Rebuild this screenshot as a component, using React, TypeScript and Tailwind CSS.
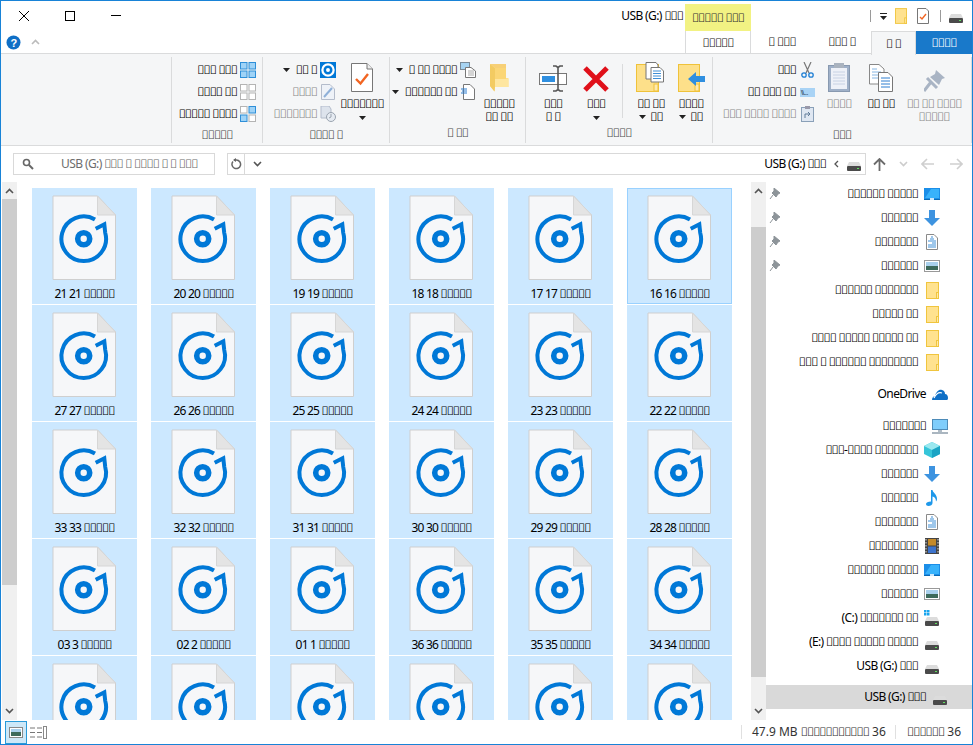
import React from "react";

const t = (s: string) =>
  s.split(/(#+)/).map((p, i) =>
    p.startsWith("#") ? (
      <span key={i} className="tracking-[-1px]">{p.replace(/#/g, "\uE000")}</span>
    ) : (
      <span key={i}>{p}</span>
    )
  );

function Txt({ s, className = "" }: { s: string; className?: string }) {
  return <span className={"whitespace-nowrap " + className}>{t(s)}</span>;
}

const Chevron = ({ up = false, c = "#555" }: { up?: boolean; c?: string }) => (
  <svg width="9" height="6" viewBox="0 0 9 6"><path d={up ? "M1 5 L4.5 1.5 L8 5" : "M1 1 L4.5 4.5 L8 1"} fill="none" stroke={c} strokeWidth="1.6" /></svg>
);

const Caret = () => (
  <svg width="7" height="4" viewBox="0 0 7 4" className="shrink-0"><path d="M0 0H7L3.5 4Z" fill="#222" /></svg>
);

const Drive = () => (
  <svg width="14" height="9" viewBox="0 0 14 9">
    <path d="M2 0H12L14 4H0Z" fill="#dcdcdc" />
    <rect x="0" y="4" width="14" height="5" rx="1" fill="#4a4a4a" />
    <rect x="10" y="6" width="2" height="1" fill="#5fe05f" />
  </svg>
);
const NavDrive = () => <span className="mt-[6px] flex"><Drive /></span>;

const FolderPlain = ({ w = 13, h = 17 }: { w?: number; h?: number }) => (
  <svg width={w} height={h} viewBox="0 0 13 17">
    <rect x="0.5" y="0.5" width="12" height="16" fill="#ffe28f" stroke="#f0c53e" />
    <rect x="10.5" y="10.5" width="2" height="6" fill="#ffe9a8" stroke="#f0c53e" />
  </svg>
);

const FileIcon = () => (
  <svg width="65" height="86" viewBox="0 0 65 86" className="block">
    <path d="M1 1 H45.500 L63.500 20 V84.500 H1 Z" fill="#f6f7f9" stroke="#cfcfcf" />
    <path d="M45.500 1 V20 H63.500 Z" fill="#e4e4e4" stroke="#d6d6d6" />
    <g transform="translate(6.7 18.7)">
      <path d="M36.300 5.800 A22.300 22.300 0 1 0 46.500 19 L45.600 10.600 L37 15" fill="none" stroke="#0078d7" strokeWidth="4" />
      <circle cx="25" cy="25" r="6" fill="none" stroke="#0078d7" strokeWidth="5.600" />
    </g>
  </svg>
);

const FILES = [
  ["21 21", "20 20", "19 19", "18 18", "17 17", "16 16"],
  ["27 27", "26 26", "25 25", "24 24", "23 23", "22 22"],
  ["33 33", "32 32", "31 31", "30 30", "29 29", "28 28"],
  ["03 3", "02 2", "01 1", "36 36", "35 35", "34 34"],
  ["", "", "", "", "", ""],
];

function Cell({ label, focus }: { label: string; focus?: boolean }) {
  return (
    <div className={"h-[116px] bg-[#cce8ff] flex flex-col items-center " + (focus ? "border border-[#99d1ff] pt-[6px]" : "pt-[7px]")}>
      <FileIcon />
      {label && <div className="mt-[5px] text-[12px] leading-[16px] text-black tracking-[-0.8px] whitespace-nowrap">{t(label + " #####")}</div>}
    </div>
  );
}

const Scroll = ({ topH, thumbH }: { topH: number; thumbH: number }) => (
  <div className="w-[15px] shrink-0 h-full bg-[#f0f0f0] flex flex-col">
    <div style={{ height: topH }} className="flex pt-[6px] justify-center shrink-0"><Chevron up /></div>
    <div style={{ height: thumbH }} className="bg-[#cdcdcd] shrink-0" />
    <div className="flex-1 flex items-end justify-center pb-[6px]"><Chevron /></div>
  </div>
);

const Pin = () => (
  <svg width="12" height="12" viewBox="0 0 12 12">
    <path d="M5 0 L11 5 L9 6 L7 9 L3 5 L5 3Z M4 7 L1 11" fill="#8d9499" stroke="#8d9499" />
  </svg>
);
const DesktopI = () => (
  <svg width="16" height="12" viewBox="0 0 16 12"><rect width="16" height="12" fill="#1b8ee8" /><path d="M1 10 L7 1H15V10Z" fill="#38b2fb" /><rect y="11" width="16" height="1" fill="#0a6ab5" /><rect x="6" y="10" width="4" height="2" fill="#cfe8fb" /></svg>
);
const DownI = () => (
  <svg width="16" height="16" viewBox="0 0 16 16"><path d="M5 0H11V8H16L8 16L0 8H5Z" fill="#3d93e0" /></svg>
);
const DocI = () => (
  <svg width="12" height="16" viewBox="0 0 12 16"><path d="M.5.5H8L11.5 4V15.5H.5Z" fill="#fff" stroke="#8a8a8a" /><path d="M5 3H7M4 5H8M2 7H10M6 9H10M2 11H10M2 13H10" stroke="#3f8fd6" /></svg>
);
const PicI = () => (
  <svg width="16" height="12" viewBox="0 0 16 12"><rect x=".5" y=".5" width="15" height="11" fill="#fff" stroke="#999" /><rect x="2" y="2" width="12" height="4" fill="#a9d0ec" /><rect x="2" y="6" width="12" height="4" fill="#3d6a5b" /></svg>
);
const MonitorI = () => (
  <svg width="16" height="15" viewBox="0 0 16 15"><rect x=".5" y=".5" width="15" height="10" fill="#7fcdfb" stroke="#4d8bb8" /><rect x="6" y="11" width="4" height="2" fill="#b0bcc6" /><rect y="13" width="16" height="2" fill="#aab6c0" /></svg>
);
const CubeI = () => (
  <svg width="16" height="16" viewBox="0 0 16 16"><path d="M8 0L16 4V12L8 16L0 12V4Z" fill="#36c5d9" /><path d="M8 0L16 4L8 8L0 4Z" fill="#9ae8ef" /><path d="M8 8L16 4V12L8 16Z" fill="#1aa3c4" /></svg>
);
const MusicI = () => (
  <svg width="12" height="16" viewBox="0 0 12 16"><path d="M5 0H6.5C7 3 11 4 11 9C11 10 10.5 11 10 11.5C10 8.5 8.5 7 6.5 6.5V13C6.5 15 4.5 16 2.5 16C1 16 0 15 0 14C0 12.5 2 11.5 5 11.5Z" fill="#1e98ea" /></svg>
);
const VideoI = () => (
  <svg width="14" height="16" viewBox="0 0 14 16"><rect width="14" height="16" fill="#444" /><rect x="3" y="1" width="8" height="6.5" fill="#c48a2a" /><rect x="3" y="8.5" width="8" height="6.5" fill="#3d73cc" /><path d="M1 1V15M13 1V15" stroke="#ddd" strokeDasharray="1.5 1.5" /></svg>
);
const CDrive = () => (
  <svg width="16" height="16" viewBox="0 0 16 16"><g fill="#19a5ee"><rect width="2.500" height="2.500" /><rect x="3" width="2.500" height="2.500" /><rect y="3" width="2.500" height="2.500" /><rect x="3" y="3" width="2.500" height="2.500" /></g><g transform="translate(1 7)"><Drive /></g></svg>
);
const Cloud = () => (
  <svg width="16" height="11" viewBox="0 0 16 11"><path d="M0 11C0 8 2 7 3 7C4 3 7 0 10 1C12 1.500 13 3 13 5C15 5 16 7 16 9C16 10 15.500 11 15 11Z" fill="#0f6fc6" /><path d="M2 9C4 5 7 3 10 4" stroke="#fff" strokeWidth="1.2" fill="none" /></svg>
);

function NavRow({ s, icon, pin, root, sel, cls = "" }: { s: string; icon: React.ReactNode; pin?: boolean; root?: boolean; sel?: boolean; cls?: string }) {
  return (
    <div className={"relative h-6 shrink-0 flex items-center justify-end gap-[6px] text-[12px] text-black " + (root ? "pr-[24px] " : "pr-[32px] ") + (sel ? "bg-[#d9d9d9] " : "") + cls}>
      {pin && <span className="absolute left-[3px] top-[6px]"><Pin /></span>}
      <Txt s={s} />
      <span className="w-[16px] h-[16px] flex items-center justify-center shrink-0">{icon}</span>
    </div>
  );
}

function RowBtn({ s, icon, caret, gray }: { s: string; icon: React.ReactNode; caret?: boolean; gray?: boolean }) {
  return (
    <div className={"h-[22px] flex items-center justify-end gap-[3px] text-[12px] " + (gray ? "text-[#8a8a8a]" : "text-black")}>
      {caret && <span className="mr-[3px]"><Caret /></span>}
      <Txt s={s} />
      <span className="w-[16px] h-[16px] flex items-center justify-center shrink-0">{icon}</span>
    </div>
  );
}

function BigBtn({ icon, l1, l2, caret, caret2, w, gray }: { icon: React.ReactNode; l1: string; l2?: string; caret?: boolean; caret2?: boolean; w: number; gray?: boolean }) {
  return (
    <div style={{ width: w }} className={"shrink-0 flex flex-col items-center text-[12px] leading-[13px] " + (gray ? "text-[#8a8a8a]" : "text-black")}>
      <div className="h-[33px] flex items-end justify-center">{icon}</div>
      <div className="mt-[5px] whitespace-nowrap">{t(l1)}</div>
      <div className="h-[13px] flex items-center justify-center gap-[4px] whitespace-nowrap">
        {caret2 && <Caret />}
        {l2 && <span>{t(l2)}</span>}
        {caret && <span className="mt-[2px]"><Caret /></span>}
      </div>
    </div>
  );
}

function Group({ w, label, children, cls = "" }: { w: number; label: string; children: React.ReactNode; cls?: string }) {
  return (
    <div style={{ width: w }} className="shrink-0 border-r border-[#dadbdc] h-[86px] mt-[3px] flex flex-col">
      <div className={"flex-1 flex items-start " + cls}>{children}</div>
      <div className="h-[20px] pt-[2px] text-center text-[12px] text-[#4c4c4c] leading-[16px]">{t(label)}</div>
    </div>
  );
}

const GridIcon = ({ a, b, c, d }: { a: boolean; b: boolean; c: boolean; d: boolean }) => (
  <svg width="16" height="16" viewBox="0 0 16 16">
    {[[0, 0, a], [8.500, 0, b], [0, 8.500, c], [8.500, 8.500, d]].map(([x, y, on], i) => (
      <rect key={i} x={(x as number) + 0.5} y={(y as number) + 0.5} width="6.500" height="6.500" fill={on ? "#9fd3f7" : "#fff"} stroke={on ? "#2f8fd8" : "#b4b4b4"} />
    ))}
  </svg>
);

const PropsIcon = () => (
  <svg width="22" height="29" viewBox="0 0 22 29"><path d="M.5.5H16L21.500 6V28.500H.5Z" fill="#fff" stroke="#777" /><path d="M16 .5V6H21.500" fill="#eee" stroke="#777" /><path d="M5 16L9.500 20.500L17 11" fill="none" stroke="#f26522" strokeWidth="2.4" /></svg>
);
const BigFolder = () => (
  <svg width="19" height="28" viewBox="0 0 19 28">
    <path d="M0 0H16V14H18.500V23H5L4.500 27.500L0 22Z" fill="#fde08e" />
    <path d="M5 4H16V23H5Z" fill="#fbd676" />
    <path d="M0 0L5 4V23L4.500 27.500L0 22Z" fill="#f3cb62" />
    <path d="M0 0H16V4H5Z" fill="#f7d077" />
    <path d="M5 15H18.500V23H5Z" fill="#fee6a0" />
  </svg>
);
const Rename = () => (
  <svg width="28" height="27" viewBox="0 0 28 27"><rect x=".5" y="8.500" width="27" height="11" fill="#fff" stroke="#777" /><rect x="3" y="11" width="13" height="6" fill="#2f8fe0" /><path d="M17 1H20L22 2.500L24 1H27M22 2.500V24.500M17 26H20L22 24.500L24 26H27" transform="translate(-3 0)" fill="none" stroke="#555" strokeWidth="1.6" /></svg>
);
const Del = () => (
  <svg width="26" height="26" viewBox="0 0 26 26"><path d="M2 2L24 24M24 2L2 24" stroke="#e0101a" strokeWidth="5" /></svg>
);
const CopyTo = () => (
  <svg width="30" height="30" viewBox="0 0 30 30"><rect x=".5" y="2.500" width="22" height="27" fill="#fde08a" stroke="#efc23a" /><rect x="18" y="22" width="4" height="7" fill="#fde9b0" stroke="#efc23a" /><path d="M10 .5H20L22 3V17H10Z" fill="#fff" stroke="#777" /><path d="M15 5.500H24L27.500 9V20H15Z" fill="#fff" stroke="#777" /><path d="M17 9H25M17 11.500H25M17 14H25M17 16.500H25" stroke="#3f8fd6" /></svg>
);
const MoveTo = () => (
  <svg width="27" height="28" viewBox="0 0 27 28"><rect x=".5" y=".5" width="21" height="27" fill="#fde08a" stroke="#efc23a" /><rect x="17" y="20" width="4" height="7" fill="#fde9b0" stroke="#efc23a" /><path d="M10 15L18 8V12H27V18H18V22Z" fill="#2f8fe0" /></svg>
);
const Paste = () => (
  <svg width="22" height="29" viewBox="0 0 22 29"><rect x=".5" y="2.500" width="21" height="26" fill="#9fb0c8" stroke="#8899b0" /><rect x="3" y="5" width="16" height="21" fill="#eef1f8" /><rect x="6" y="0" width="10" height="5" fill="#aab3bf" /><path d="M5 9H17M5 12H17M5 15H17M5 18H17M5 21H17" stroke="#c8d2e4" /></svg>
);
const CopyBig = () => (
  <svg width="24" height="28" viewBox="0 0 24 28"><path d="M.5.5H10L15 5V20H.5Z" fill="#fff" stroke="#888" /><path d="M3 5H8M3 8H12M3 11H12M3 14H12" stroke="#86b6e4" /><path d="M9.500 8.500H19L23.500 13V27.500H9.500Z" fill="#fff" stroke="#777" /><path d="M12 14H21M12 17H21M12 20H21M12 23H21" stroke="#2f7fd0" /></svg>
);
const PinBig = () => (
  <svg width="21" height="22" viewBox="0 0 21 22"><path d="M12 0L21 8L18 9L15 15L6 7L11 4Z" fill="#a9b4c4" /><path d="M7 12L0 21M3 8L13 18" stroke="#a9b4c4" strokeWidth="3" /></svg>
);
const Scissors = () => (
  <svg width="13" height="16" viewBox="0 0 13 16"><path d="M3 0L8 11M10 0L5 11" stroke="#777" strokeWidth="1.200" /><circle cx="3" cy="13" r="2.200" fill="none" stroke="#1f7fd4" strokeWidth="1.300" /><circle cx="10" cy="13" r="2.200" fill="none" stroke="#1f7fd4" strokeWidth="1.300" /></svg>
);

export default function App() {
  return (
    <div className="w-[973px] h-[745px] bg-white border border-[#1883d7] overflow-hidden flex flex-col font-['Noto_Sans','Liberation_Sans',sans-serif] text-[12px] tracking-[-0.6px]">
      {/* title */}
      <div className="h-[30px] shrink-0 flex items-center relative">
        <div className="w-[46px] flex justify-center"><svg width="12" height="12" viewBox="0 0 12 12"><path d="M1 1L11 11M11 1L1 11" stroke="#000" /></svg></div>
        <div className="w-[46px] flex justify-center"><svg width="10" height="10" viewBox="0 0 10 10"><rect x=".5" y=".5" width="9" height="9" fill="none" stroke="#000" /></svg></div>
        <div className="w-[46px] flex justify-center"><svg width="10" height="2" viewBox="0 0 10 2"><rect width="10" height="1" fill="#000" /></svg></div>
        <div className="flex-1 text-right pr-[2px]"><Txt s="USB (G:) ###" /></div>
        <div className="w-[66px] h-[27px] mt-[3px] bg-[#f2f283] text-center leading-[27px] text-[#333] shrink-0">{t("##### ###")}</div>
        <div className="w-[119px] shrink-0" />
        <div className="w-px h-[12px] bg-[#9a9a9a] shrink-0" />
        <div className="w-[24px] shrink-0 flex justify-center"><svg width="7" height="7" viewBox="0 0 7 7"><rect width="7" height="1" fill="#222" /><path d="M0 3H7L3.500 7Z" fill="#222" /></svg></div>
        <div className="w-[12px] shrink-0 mr-[10px]"><FolderPlain w={12} h={16} /></div>
        <div className="w-[12px] shrink-0 mr-[11px]"><svg width="12" height="16" viewBox="0 0 12 16"><path d="M.5.5H9L11.500 3V15.500H.5Z" fill="#fff" stroke="#777" /><path d="M3 9L5 11L9 6" fill="none" stroke="#f26522" strokeWidth="1.400" /></svg></div>
        <div className="w-px h-[12px] bg-[#9a9a9a] shrink-0" />
        <div className="shrink-0 pl-[8px] pr-[9px] pt-[4px]"><Drive /></div>
      </div>
      {/* tabs */}
      <div className="h-[23px] shrink-0 flex items-center relative border-b border-[#dadbdc]">
        <div className="w-[22px] flex justify-center ml-[1px]"><svg width="15" height="15" viewBox="0 0 15 15"><circle cx="7.500" cy="7.500" r="7" fill="#0f6fc6" /><text x="7.500" y="11.500" textAnchor="middle" fontSize="11" fontWeight="700" fill="#fff" fontFamily="Liberation Sans">?</text></svg></div>
        <div className="w-[22px] flex justify-center"><Chevron up c="#bbb" /></div>
        <div className="ml-[639px] w-[66px] h-full border-x border-[#dadbdc] text-center leading-[23px] text-[#222]">{t("#####")}</div>
        <div className="w-[62px] text-center text-[#222]">{t("# ###")}</div>
        <div className="w-[58px] text-center text-[#222]">{t("### #")}</div>
        <div className="w-[45px] h-[24px] mt-[1px] bg-[#f5f6f7] border-x border-t border-[#dadbdc] text-center leading-[23px] text-[#222]">{t("# #")}</div>
        <div className="w-[56px] h-[23px] bg-[#1979ca] text-white text-center leading-[23px]">{t("####")}</div>
      </div>
      {/* ribbon */}
      <div className="h-[92px] shrink-0 bg-[#f5f6f7] border-b border-[#dadbdc] flex">
        <Group w={171} label=""><span /></Group>
        <Group w={91} label="#####" cls="flex-col pr-[6px] pt-[2px]">
          <div className="w-full"><RowBtn s="### ###" icon={<GridIcon a b c d />} /></div>
          <div className="w-full"><RowBtn s="#### ##" icon={<GridIcon a={false} b={false} c={false} d={false} />} /></div>
          <div className="w-full"><RowBtn s="##### ####" icon={<GridIcon a={false} b c d={false} />} /></div>
        </Group>
        <Group w={127} label="#### #" cls="pl-[1px] pt-[2px]">
          <div className="w-[72px] shrink-0 flex flex-col">
            <RowBtn caret s="## #" icon={<span className="w-4 h-4 bg-[#0078d7] flex items-center justify-center"><svg width="14" height="14" viewBox="0 0 50 50"><circle cx="25" cy="25" r="20" fill="none" stroke="#fff" strokeWidth="8" /><circle cx="25" cy="25" r="7" fill="#fff" /></svg></span>} />
            <RowBtn gray s="####" icon={<svg width="14" height="16" viewBox="0 0 14 16"><path d="M.5.5H9L13.500 5V15.500H.5Z" fill="#eef2f8" stroke="#b4bccb" /><path d="M3 13L11 4" stroke="#8fb0d8" strokeWidth="2" /></svg>} />
            <RowBtn gray s="#######" icon={<svg width="16" height="16" viewBox="0 0 16 16"><path d="M1 0H9L11 3V12H1Z" fill="#dde3ec" stroke="#b4bccb" /><circle cx="11" cy="11" r="4.500" fill="#e6ebf2" stroke="#9aa3af" /><path d="M11 8V11L9 12" stroke="#9aa3af" fill="none" /></svg>} />
          </div>
          <div className="ml-[5px]"><BigBtn w={42} icon={<PropsIcon />} l1="#######" caret /></div>
        </Group>
        <Group w={136} label="# ##" cls="pl-[5px] pt-[2px]">
          <div className="w-[81px] shrink-0 flex flex-col">
            <RowBtn caret s="# ## ####" icon={<svg width="16" height="16" viewBox="0 0 16 16"><rect x=".5" y=".5" width="9" height="7" fill="#a6d3f2" stroke="#7a8a98" /><path d="M5.500 5.500H11L15.500 9V15.500H5.500Z" fill="#fff" stroke="#777" /><path d="M8 9H14M8 11H14M8 13H14" stroke="#aaa" /></svg>} />
            <RowBtn caret s="###### ##" icon={<svg width="14" height="16" viewBox="0 0 14 16"><path d="M2.500.5H9L13.500 5V15.500H2.500Z" fill="#fff" stroke="#777" /><path d="M0 5H6M1 7H6M0 9H6" stroke="#2f7fd0" /></svg>} />
          </div>
          <div className="ml-[1px]"><BigBtn w={44} icon={<BigFolder />} l1="#####" l2="## ##" /></div>
        </Group>
        <Group w={187} label="####" cls="pl-[1px] pt-[2px]">
          <BigBtn w={52} icon={<Rename />} l1="###" l2="# #" />
          <BigBtn w={34} icon={<Del />} l1="###" caret />
          <div className="w-px h-[54px] bg-[#dadbdc] ml-[9px] mt-[5px] shrink-0" />
          <div className="ml-[9px]"><BigBtn w={38} icon={<CopyTo />} l1="## ##" l2="##" caret2 /></div>
          <div className="ml-[2px]"><BigBtn w={38} icon={<MoveTo />} l1="####" l2="##" caret2 /></div>
        </Group>
        <Group w={259} label="###" cls="pt-[2px]">
          <div className="w-[102px] shrink-0 flex flex-col">
            <RowBtn s="###" icon={<Scissors />} />
            <RowBtn s="## ### ##" icon={<svg width="15" height="9" viewBox="0 0 15 9"><rect width="15" height="9" fill="#a9d3f5" /><text x="1" y="7" fontSize="7" fill="#123" fontFamily="Liberation Sans">\\...</text></svg>} />
            <RowBtn gray s="### #### ####" icon={<svg width="13" height="16" viewBox="0 0 13 16"><rect x=".5" y="1.500" width="12" height="14" fill="#dfe7f2" stroke="#8aa0b8" /><rect x="4" y="0" width="5" height="3" fill="#99a" /><path d="M4 12V8H9M7 6L9 8L7 10" stroke="#5f7a98" fill="none" /></svg>} />
          </div>
          <div className="ml-[2px]"><BigBtn w={44} gray icon={<Paste />} l1="####" /></div>
          <BigBtn w={40} icon={<CopyBig />} l1="## ##" />
          <BigBtn w={66} gray icon={<PinBig />} l1="## ## ####" l2="#####" />
        </Group>
      </div>
      {/* address */}
      <div className="h-[36px] shrink-0 pl-[12px] pt-[7px]">
        <div className="h-[22px] flex items-center">
          <div className="w-[202px] h-[22px] shrink-0 border border-[#d9d9d9] flex items-center pl-[8px] text-[#6d6d6d]">
            <svg width="12" height="12" viewBox="0 0 12 12" className="shrink-0"><circle cx="4.500" cy="4.500" r="3" fill="none" stroke="#666" strokeWidth="1.600" /><path d="M7 7L11 11" stroke="#666" strokeWidth="2" /></svg>
            <Txt s="USB (G:) ### # #### # # ###" className="ml-[27px]" />
          </div>
          <div className="ml-[12px] w-[639px] h-[22px] shrink-0 border border-[#d9d9d9] flex items-center">
            <div className="w-[17px] h-full border-r border-[#d9d9d9] flex items-center justify-center"><svg width="11" height="12" viewBox="0 0 11 12"><path d="M2 3.500A4.300 4.300 0 1 0 5.500 2H3" fill="none" stroke="#666" strokeWidth="1.500" /><path d="M5 0V4L2 2Z" fill="#666" /></svg></div>
            <div className="w-[24px] flex justify-center"><Chevron /></div>
            <div className="flex-1 flex items-center justify-end pr-[4px] gap-[8px]">
              <Txt s="USB (G:) ###" />
              <svg width="5" height="8" viewBox="0 0 5 8"><path d="M4 1L1 4L4 7" fill="none" stroke="#555" strokeWidth="1.300" /></svg>
              <span className="pt-[4px]"><Drive /></span>
            </div>
          </div>
          <div className="ml-[7px]"><svg width="13" height="13" viewBox="0 0 13 13"><path d="M6.500 13V1M1 6.500L6.500 1L12 6.500" fill="none" stroke="#6b6b6b" strokeWidth="1.800" /></svg></div>
          <div className="ml-[13px]"><Chevron c="#ccc" /></div>
          <div className="ml-[13px]"><svg width="13" height="12" viewBox="0 0 13 12"><path d="M13 6H1M6 1L1 6L6 11" fill="none" stroke="#cfcfcf" strokeWidth="1.600" /></svg></div>
          <div className="ml-[16px]"><svg width="13" height="12" viewBox="0 0 13 12"><path d="M0 6H12M7 1L12 6L7 11" fill="none" stroke="#cfcfcf" strokeWidth="1.600" /></svg></div>
        </div>
      </div>
      {/* main */}
      <div className="flex-1 min-h-0 flex">
        <div className="ml-px h-full"><Scroll topH={17} thumbH={386} /></div>
        <div className="w-[734px] pl-[15px] pt-[6px] overflow-hidden shrink-0">
          <div className="grid grid-cols-[repeat(6,105px)] gap-x-[14px] gap-y-px">
            {FILES.map((r, i) => r.map((l, j) => <Cell key={i + "-" + j} label={l} focus={i === 0 && j === 5} />))}
          </div>
        </div>
        <Scroll topH={45} thumbH={450} />
        <div className="flex-1 flex flex-col overflow-hidden">
          <NavRow pin s="###### #####" icon={<DesktopI />} />
          <NavRow pin s="######" icon={<DownI />} />
          <NavRow pin s="#######" icon={<DocI />} />
          <NavRow pin s="######" icon={<PicI />} />
          <NavRow s="###### #######" icon={<FolderPlain />} />
          <NavRow s="##### ##" icon={<FolderPlain />} />
          <NavRow s="#### ##### ##### ##" icon={<FolderPlain />} />
          <NavRow s="### # ###### ########" icon={<FolderPlain />} />
          <NavRow root s="OneDrive" icon={<Cloud />} cls="mt-[8px]" />
          <NavRow root s="#######" icon={<MonitorI />} cls="mt-[8px]" />
          <NavRow s="###-#### #######" icon={<CubeI />} />
          <NavRow s="######" icon={<DownI />} />
          <NavRow s="######" icon={<MusicI />} />
          <NavRow s="#######" icon={<DocI />} />
          <NavRow s="########" icon={<VideoI />} />
          <NavRow s="###### #####" icon={<DesktopI />} />
          <NavRow s="######" icon={<PicI />} />
          <NavRow s="(C:) ####### ##" icon={<CDrive />} />
          <NavRow s="(E:) #### ##### #####" icon={<NavDrive />} />
          <NavRow s="USB (G:) ###" icon={<NavDrive />} />
          <NavRow root sel s="USB (G:) ###" icon={<NavDrive />} cls="mt-[7px]" />
        </div>
      </div>
      {/* status */}
      <div className="h-[24px] shrink-0 flex items-center relative tracking-normal">
        <div className="ml-[4px] w-[22px] h-[23px] bg-[#cde8f8] border border-[#2a9ad8] flex items-center justify-center"><svg width="14" height="11" viewBox="0 0 14 11"><rect x=".5" y=".5" width="13" height="10" fill="#fff" stroke="#888" /><rect x="2" y="2" width="10" height="3" fill="#a9d0ec" /><rect x="2" y="5" width="10" height="4" fill="#3d6a5b" /></svg></div>
        <div className="ml-[3px]"><svg width="17" height="13" viewBox="0 0 17 13"><path d="M0 2H5M7 2H12M0 6.500H5M7 6.500H12M0 11H5M7 11H12" stroke="#777" /><rect x="13.500" y=".5" width="3" height="12" fill="#fff" stroke="#888" /></svg></div>
        <div className="ml-[694px] w-px h-[14px] bg-[#e0e0e0]" />
        <div className="ml-[10px] w-[133px] text-[#333]"><Txt s="47.9 MB ########### 36" /></div>
        <div className="ml-[10px] w-px h-[14px] bg-[#e0e0e0]" />
        <div className="ml-[11px] text-[#333]"><Txt s="###### 36" /></div>
      </div>
    </div>
  );
}
